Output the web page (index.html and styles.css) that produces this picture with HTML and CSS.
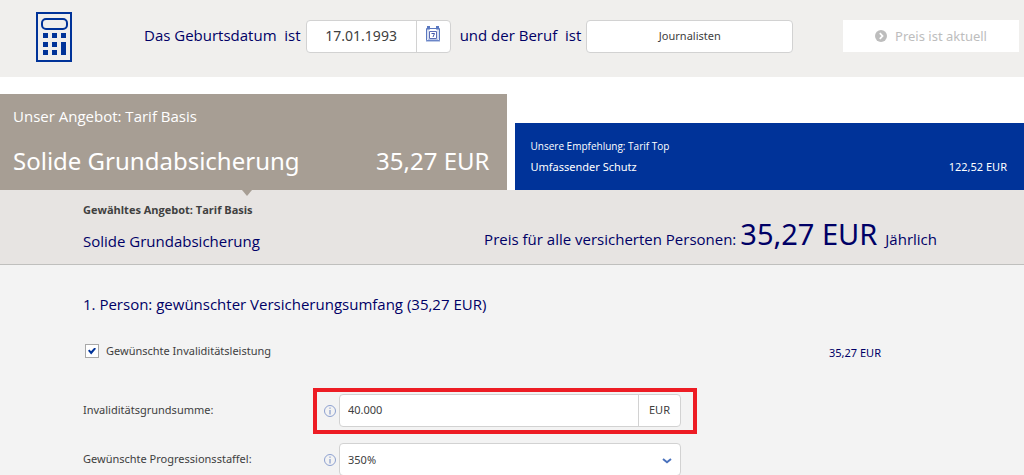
FILE: index.html
```
<!DOCTYPE html>
<html lang="de">
<head>
<meta charset="utf-8">
<meta name="viewport" content="width=device-width, initial-scale=1">
<title>Unfallversicherung Tarifrechner</title>
<link rel="stylesheet" href="styles.css">
</head>
<body>
<header class="topbar">
  <svg class="calculator" viewBox="0 0 36 50" aria-hidden="true">
    <rect x="1" y="1" width="34" height="48" fill="none" stroke="#003399" stroke-width="2"/>
    <rect x="6" y="7" width="25" height="10" rx="4" fill="none" stroke="#003399" stroke-width="2"/>
    <path fill="#003399" d="M7 21h5v5H7zM16 21h5v5h-5zM25 21h5v5h-5zM7 30h5v5H7zM16 30h5v5h-5zM7 38h5v5H7zM16 38h5v5h-5zM25 30h5v13h-5z"/>
  </svg>
  <form class="query">
    <label class="query-text" for="birth">Das Geburtsdatum&nbsp; ist</label>
    <div class="field-group date-group">
      <input class="field date-field" id="birth" type="text" value="17.01.1993">
      <button class="calendar-button" type="button" aria-label="Kalender">
        <svg class="calendar-icon" viewBox="0 0 16 16" aria-hidden="true">
          <path d="M1.500 2.500h13v12h-13z" fill="#fff" stroke="#5a78c0"/>
          <path d="M3 2v11.500h10V2" fill="none" stroke="#b4c3e6"/>
          <path d="M1 15h14" stroke="#7d95d0"/>
          <path d="M3.500 0v3.500M12.500 0v3.500" stroke="#5a78c0" stroke-width="3"/>
          <path d="M4.500 5.500h7v7h-7z" fill="#fff" stroke="#5a6cb4"/>
          <path d="M6.500 7.500h3l-1.500 3.500" fill="none" stroke="#3f55a8"/>
        </svg>
      </button>
    </div>
    <label class="query-text" for="job">und der Beruf&nbsp; ist</label>
    <input class="field job-field" id="job" type="text" value="Journalisten">
  </form>
  <button class="price-button" type="button" disabled>
    <svg class="price-icon" viewBox="0 0 12 12" aria-hidden="true">
      <circle cx="6" cy="6" r="6" fill="#bdbdbd"/>
      <path d="M4.800 3.200L7.500 6L4.800 8.800" fill="none" stroke="#fff" stroke-width="1.800"/>
    </svg>
    Preis ist aktuell
  </button>
</header>

<nav class="offers">
  <a class="offer offer-basis" href="#basis">
    <span class="offer-kicker">Unser Angebot: Tarif Basis</span>
    <span class="offer-line"><span>Solide Grundabsicherung</span><span>35,27 EUR</span></span>
  </a>
  <a class="offer offer-top" href="#top">
    <span class="offer-kicker">Unsere Empfehlung: Tarif Top</span>
    <span class="offer-line"><span>Umfassender Schutz</span><span>122,52 EUR</span></span>
  </a>
</nav>

<section class="summary" id="basis">
  <div>
    <p class="summary-kicker">Gewähltes Angebot: Tarif Basis</p>
    <h1 class="summary-title">Solide Grundabsicherung</h1>
  </div>
  <p class="total"><span>Preis für alle versicherten Personen:</span><strong class="total-price">35,27 EUR</strong><span class="total-period">Jährlich</span></p>
</section>

<main class="details">
  <h2 class="person">1. Person: gewünschter Versicherungsumfang (35,27 EUR)</h2>
  <div class="benefit">
    <label class="benefit-label"><input class="check" type="checkbox" checked>Gewünschte Invaliditätsleistung</label>
    <span class="benefit-price">35,27 EUR</span>
  </div>
  <div class="row">
    <label class="row-label" for="sum">Invaliditätsgrundsumme:</label>
    <div class="control marked">
      <svg class="info" viewBox="0 0 12 12" aria-hidden="true"><circle cx="6" cy="6" r="5.500" fill="none" stroke="#8da0cf"/><path d="M6 5v4.500M6 2.500v1.300" stroke="#7189c4"/></svg>
      <div class="field-group">
        <input class="field sum-field" id="sum" type="text" value="40.000">
        <span class="unit">EUR</span>
      </div>
    </div>
  </div>
  <div class="row">
    <label class="row-label" for="scale">Gewünschte Progressionsstaffel:</label>
    <div class="control">
      <svg class="info" viewBox="0 0 12 12" aria-hidden="true"><circle cx="6" cy="6" r="5.500" fill="none" stroke="#8da0cf"/><path d="M6 5v4.500M6 2.500v1.300" stroke="#7189c4"/></svg>
      <div class="field-group select-group">
        <select class="field scale-field" id="scale"><option>350%</option></select>
        <svg class="chevron" viewBox="0 0 10 6" aria-hidden="true"><path d="M1 1l4 3.200l4-3.200" fill="none" stroke="#4a72bd" stroke-width="2"/></svg>
      </div>
    </div>
  </div>
</main>
</body>
</html>
```
FILE: styles.css
```
* {
  box-sizing: border-box;
}

body {
  margin: 0;
  height: 100vh;
  display: flex;
  flex-direction: column;
  background: #fff;
  color: #404040;
  font-family: "Noto Sans", "Open Sans", sans-serif;
  font-size: 11px;
  line-height: 16px;
}

p, h1, h2 {
  margin: 0;
  font-weight: 400;
}

input, select, button {
  margin: 0;
  font: inherit;
  color: inherit;
}

.query-text,
.offer-kicker,
.summary-kicker,
.summary-title,
.total,
.person {
  font-family: "Open Sans", "Noto Sans", sans-serif;
}

.topbar {
  flex: none;
  display: flex;
  align-items: flex-start;
  padding: 12px 5px 15px 36px;
  background: #f0efed;
}

.calculator {
  flex: none;
  width: 36px;
  height: 50px;
}

.query {
  display: flex;
  align-items: center;
  gap: 5px;
  margin: 8px 0 0 68px;
}

.query-text {
  padding: 0 0 3px 4px;
  color: #000066;
  font-size: 15px;
  line-height: 20px;
  white-space: nowrap;
}

.field-group {
  flex: 1;
  display: flex;
  height: 33px;
  background: #fff;
  border: 1px solid #d2d2d2;
  border-radius: 4px;
}

.field {
  border: 0;
  outline: 0;
  background: transparent;
}

.date-group {
  flex: none;
}

.date-field {
  width: 110px;
  padding-bottom: 3px;
  border-right: 1px solid #d2d2d2;
  font-size: 14px;
  text-align: center;
}

.calendar-button {
  display: flex;
  align-items: center;
  justify-content: center;
  width: 33px;
  padding: 0 0 5px;
  border: 0;
  background: transparent;
}

.calendar-icon {
  width: 16px;
  height: 16px;
}

.job-field {
  width: 207px;
  height: 33px;
  padding-bottom: 4px;
  background: #fff;
  border: 1px solid #d2d2d2;
  border-radius: 4px;
  text-align: center;
}

.price-button {
  display: flex;
  align-items: center;
  justify-content: center;
  gap: 8px;
  width: 176px;
  height: 32px;
  margin: 8px 0 0 auto;
  padding: 0;
  border: 0;
  background: #fff;
  color: #bdbdbd;
  font-size: 13px;
}

.price-icon {
  width: 12px;
  height: 12px;
}

.offers {
  flex: none;
  display: flex;
  align-items: flex-end;
  gap: 8px;
  padding-top: 17px;
}

.offer {
  display: flex;
  flex-direction: column;
  color: #fff;
  text-decoration: none;
}

.offer-line {
  display: flex;
  justify-content: space-between;
  white-space: nowrap;
}

.offer-basis {
  position: relative;
  flex: 508;
  gap: 17px;
  padding: 12px 17px 12px 13px;
  background: #a79e94;
  font-size: 15px;
  line-height: 20px;
}

.offer-basis::after {
  content: "";
  position: absolute;
  top: 100%;
  left: 242px;
  border: 5px solid transparent;
  border-top: 6px solid #a79e94;
  border-bottom: 0;
}

.offer-basis .offer-line {
  font-size: 24px;
  line-height: 35px;
}

.offer-top {
  flex: 508;
  gap: 5px;
  padding: 15px 17px 15px 16px;
  background: #003399;
  font-size: 10px;
}

.offer-top .offer-line {
  font-size: 11px;
}

.summary {
  flex: none;
  display: flex;
  justify-content: space-between;
  padding: 12px 87px 13px 83px;
  border-bottom: 1px solid #bfbfbd;
  background: #e7e4e2;
}

.summary-kicker {
  font-size: 11px;
  font-weight: 700;
}

.summary-title {
  margin-top: 13px;
  color: #000066;
  font-size: 15px;
  line-height: 20px;
}

.total {
  display: flex;
  align-items: baseline;
  gap: 4px;
  padding-top: 15px;
  color: #000066;
  font-size: 15px;
  line-height: 20px;
  white-space: nowrap;
}

.total-price {
  font-family: "Noto Sans", "Open Sans", sans-serif;
  font-size: 29px;
  font-weight: 400;
  line-height: 34px;
}

.total-period {
  padding-left: 4px;
}

.details {
  flex: 1;
  overflow: hidden;
  padding: 29px 143px 0 83px;
  background: #f3f3f3;
}

.person {
  color: #000066;
  font-size: 15px;
  line-height: 20px;
}

.benefit {
  display: flex;
  justify-content: space-between;
  align-items: center;
  margin: 29px 0 35px;
}

.benefit-label {
  display: flex;
  align-items: center;
  gap: 7px;
  padding-left: 2px;
}

.benefit-price {
  padding-top: 3px;
  color: #000066;
  line-height: 13px;
}

.check {
  appearance: none;
  display: grid;
  place-items: center;
  width: 14px;
  height: 14px;
  border: 1px solid #a8a8a8;
  background: #fff;
}

.check:checked::before {
  content: "";
  width: 8px;
  height: 7px;
  background: #003399;
  clip-path: polygon(0 45%, 18% 30%, 38% 55%, 82% 0, 100% 18%, 40% 100%);
}

.row {
  display: grid;
  grid-template-columns: 241px minmax(0, 357px);
  align-items: center;
  margin-bottom: 16px;
}

.row-label {
  padding-bottom: 2px;
}

.control {
  position: relative;
  display: flex;
  align-items: center;
  gap: 3px;
}

.marked::after {
  content: "";
  position: absolute;
  inset: -6px -16px -7px -11px;
  border: 4px solid #ed1c24;
  pointer-events: none;
}

.info {
  flex: none;
  width: 12px;
  height: 12px;
}

.sum-field {
  flex: 1;
  min-width: 0;
  padding: 0 8px 2px;
}

.unit {
  width: 42px;
  border-left: 1px solid #d2d2d2;
  line-height: 30px;
  text-align: center;
}

.select-group {
  position: relative;
}

.scale-field {
  flex: 1;
  appearance: none;
  padding: 0 8px;
}

.chevron {
  position: absolute;
  right: 8px;
  top: 14px;
  width: 10px;
  height: 6px;
  pointer-events: none;
}
```
